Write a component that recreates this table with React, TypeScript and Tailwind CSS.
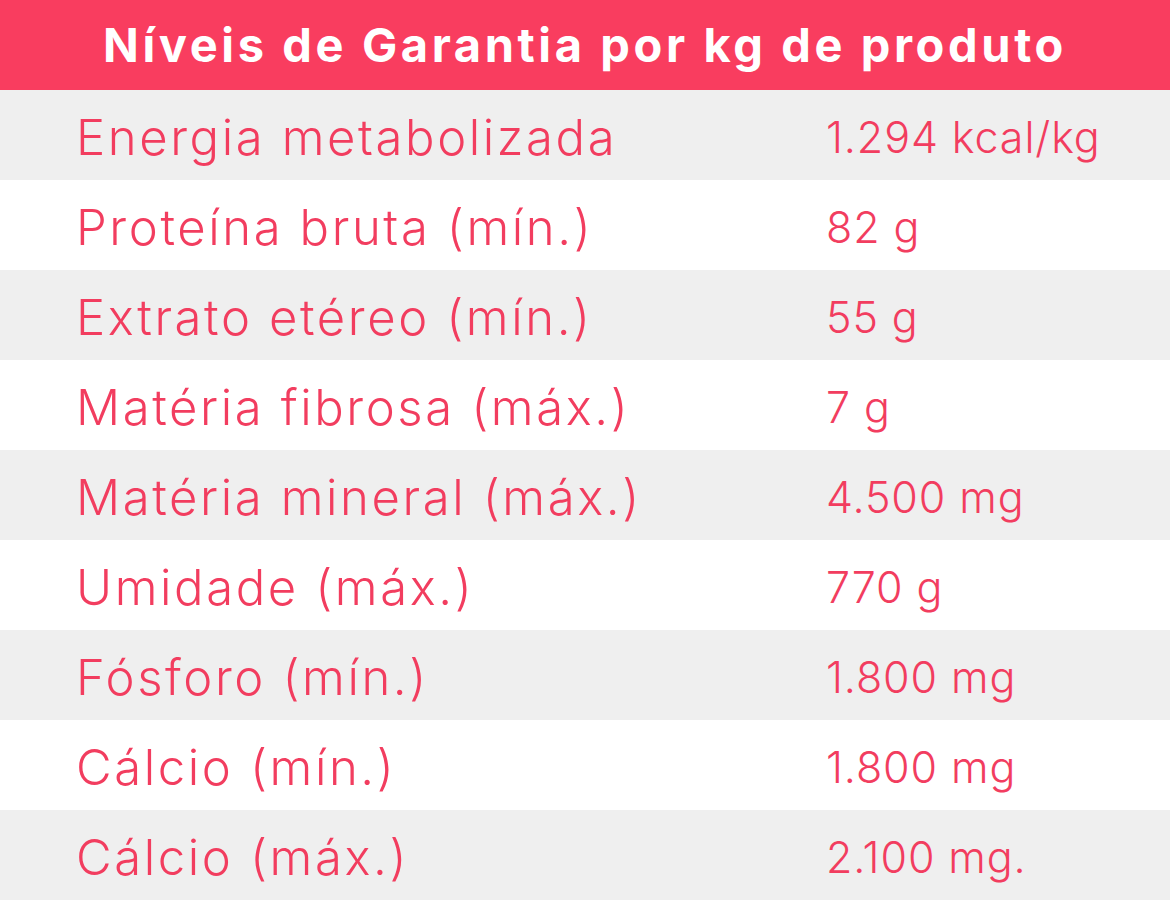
import React from 'react';

const rows: [string, string][] = [
  ['Energia metabolizada', '1.294 kcal/kg'],
  ['Proteína bruta (mín.)', '82 g'],
  ['Extrato etéreo (mín.)', '55 g'],
  ['Matéria fibrosa (máx.)', '7 g'],
  ['Matéria mineral (máx.)', '4.500 mg'],
  ['Umidade (máx.)', '770 g'],
  ['Fósforo (mín.)', '1.800 mg'],
  ['Cálcio (mín.)', '1.800 mg'],
  ['Cálcio (máx.)', '2.100 mg.'],
];

export default function App() {
  return (
    <div className="w-[1170px] h-[900px] bg-white font-['Inter',sans-serif]">
      <div className="h-[90px] bg-[#f93d5f] flex items-center justify-center">
        <h1 className="text-white font-bold text-[47px] tracking-[3.6px] leading-none pb-[2px]">
          Níveis de Garantia por kg de produto
        </h1>
      </div>
      {rows.map(([label, value], i) => (
        <div
          key={i}
          className={`h-[90px] flex items-center text-[#f23d5f] font-light pt-[4px] ${i % 2 === 0 ? 'bg-[#efefef]' : 'bg-white'}`}
        >
          <div className="w-[826px] pl-[76px] text-[49px] leading-none tracking-[2.6px]">{label}</div>
          <div className="text-[43px] leading-none tracking-[0.9px]">{value}</div>
        </div>
      ))}
    </div>
  );
}
